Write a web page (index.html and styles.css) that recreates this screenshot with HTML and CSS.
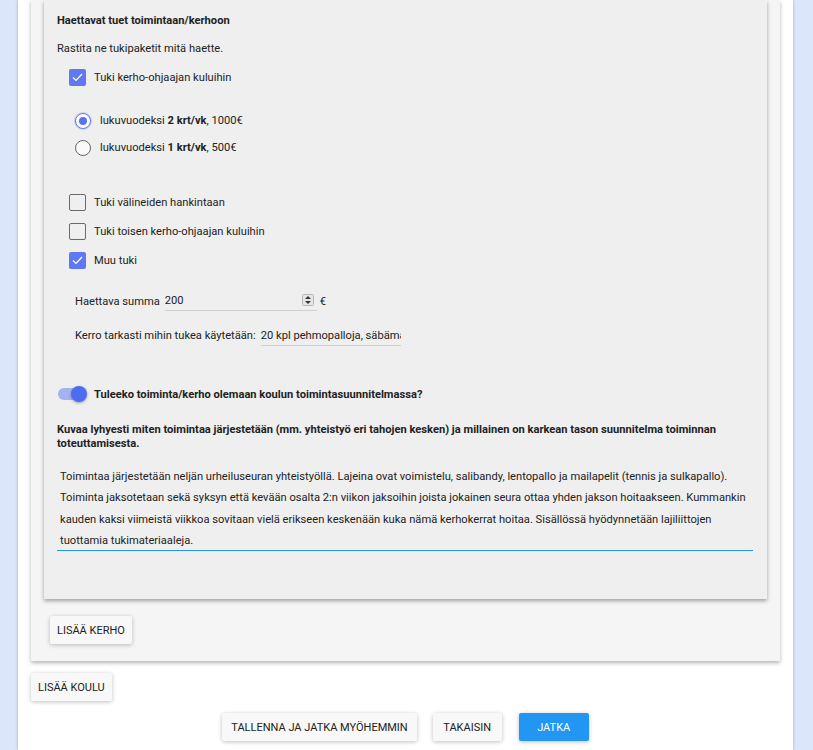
FILE: index.html
```html
<!DOCTYPE html>
<html lang="fi">
<head>
<meta charset="utf-8">
<title>Hakemus: kerhot</title>
<link rel="stylesheet" href="styles.css">
</head>
<body>
<div class="page">

<div class="school-card">
  <div class="club-card">
    <div class="section-title">Haettavat tuet toimintaan/kerhoon</div>
    <p class="hint">Rastita ne tukipaketit mitä haette.</p>

    <label class="check-row first">
      <span class="checkbox checked"><svg viewBox="0 0 17 17" width="17" height="17"><polyline points="4,8.5 7,11.5 13,5" fill="none" stroke="#fff" stroke-width="1.2"/></svg></span>
      Tuki kerho-ohjaajan kuluihin
    </label>

    <div class="radio-group">
      <label class="radio-row"><span class="radio checked"></span>lukuvuodeksi&nbsp;<b>2 krt/vk</b>, 1000€</label>
      <label class="radio-row"><span class="radio"></span>lukuvuodeksi&nbsp;<b>1 krt/vk</b>, 500€</label>
    </div>

    <div class="check-group">
      <label class="check-row"><span class="checkbox"></span>Tuki välineiden hankintaan</label>
      <label class="check-row"><span class="checkbox"></span>Tuki toisen kerho-ohjaajan kuluihin</label>
      <label class="check-row">
        <span class="checkbox checked"><svg viewBox="0 0 17 17" width="17" height="17"><polyline points="4,8.5 7,11.5 13,5" fill="none" stroke="#fff" stroke-width="1.2"/></svg></span>
        Muu tuki
      </label>
    </div>

    <div class="field-row sum-row">
      <span class="field-label">Haettava summa</span>
      <span class="field-input sum-input">200
        <svg class="spinner" viewBox="0 0 12 12" width="12" height="12"><rect x="0.5" y="0.5" width="11" height="11" rx="1" fill="#e6e6e6" stroke="#b5b5b5"/><polygon points="3,5 6,2 9,5" fill="#333"/><polygon points="3,7 6,10 9,7" fill="#333"/></svg>
      </span>
      <span class="unit">€</span>
    </div>

    <div class="field-row use-row">
      <span class="field-label">Kerro tarkasti mihin tukea käytetään:</span>
      <input class="text-input" type="text" value="20 kpl pehmopalloja, säbämailoja">
    </div>

    <div class="toggle-row">
      <span class="toggle"><span class="toggle-knob"></span></span>
      <span class="toggle-label">Tuleeko toiminta/kerho olemaan koulun toimintasuunnitelmassa?</span>
    </div>

    <div class="question">Kuvaa lyhyesti miten toimintaa järjestetään (mm. yhteistyö eri tahojen kesken) ja millainen on karkean tason suunnitelma toiminnan toteuttamisesta.</div>

    <div class="answer">Toimintaa järjestetään neljän urheiluseuran yhteistyöllä. Lajeina ovat voimistelu, salibandy, lentopallo ja mailapelit (tennis ja sulkapallo). Toiminta jaksotetaan sekä syksyn että kevään osalta 2:n viikon jaksoihin joista jokainen seura ottaa yhden jakson hoitaakseen. Kummankin kauden kaksi viimeistä viikkoa sovitaan vielä erikseen keskenään kuka nämä kerhokerrat hoitaa. Sisällössä hyödynnetään lajiliittojen tuottamia tukimateriaaleja.</div>
  </div>

  <button class="btn add-club">Lisää kerho</button>
</div>

<button class="btn add-school">Lisää koulu</button>

<div class="actions">
  <button class="btn save">Tallenna ja jatka myöhemmin</button>
  <button class="btn back">Takaisin</button>
  <button class="btn primary">Jatka</button>
</div>

</div>
</body>
</html>
```

FILE: styles.css
```css
/* Hakemuslomake: kerhojen tuet */

body
{ margin: 0;
background-color: #dce6fb;
font-family: Roboto, "Liberation Sans", sans-serif;
font-size: 11.15px;
color: #222;
}

div.page
{ width: 775px;
margin-left: 18px;
height: 750px;
background-color: #fff;
box-shadow: 0 0 3px rgba(0,0,0,0.25);
overflow: hidden;
}

/* Cards */

div.school-card
{ margin: 0 13px;
padding-bottom: 17px;
background-color: #f5f5f5;
box-shadow: 0 2px 4px rgba(0,0,0,0.3);
}

div.club-card
{ margin: 0 13px;
padding: 13px 14px 48px 13px;
background-color: #efefef;
box-shadow: 0 2px 4px rgba(0,0,0,0.35);
}

div.section-title
{ font-weight: bold;
line-height: 16px;
}

p.hint
{ margin: 12px 0 0 0;
line-height: 16px;
}

/* Checkboxes and radios */

label.check-row
{ display: flex;
align-items: center;
height: 29px;
padding-left: 12px;
}

label.check-row.first
{ margin-top: 6px;
}

span.checkbox
{ box-sizing: border-box;
width: 17px;
height: 17px;
margin-right: 8px;
border: 1px solid #6b6b6b;
border-radius: 2px;
display: flex;
}

span.checkbox.checked
{ border: none;
background-color: #6079f0;
}

div.radio-group
{ margin-top: 15px;
padding-left: 18px;
}

label.radio-row
{ display: flex;
align-items: center;
height: 27px;
}

span.radio
{ box-sizing: border-box;
width: 16px;
height: 16px;
margin-right: 9px;
border: 1px solid #666;
border-radius: 50%;
background-color: #fafafa;
position: relative;
}

span.radio.checked
{ border-color: #6079f0;
background-color: #fff;
box-shadow: 0 0 0 1px rgba(96,121,240,0.25);
}

span.radio.checked::after
{ content: "";
position: absolute;
left: 3px; top: 3px;
width: 8px; height: 8px;
border-radius: 50%;
background-color: #5b73f0;
}

div.check-group
{ margin-top: 27px;
}

/* Text fields */

div.field-row
{ display: flex;
align-items: center;
padding-left: 18px;
}

div.sum-row
{ margin-top: 16px;
}

div.use-row
{ margin-top: 14px;
}

span.field-label
{ margin-right: 2px;
}

span.field-input
{ box-sizing: border-box;
height: 20px;
display: flex;
align-items: center;
border-bottom: 1px solid #d0d0d0;
white-space: nowrap;
overflow: hidden;
}

span.sum-input
{ width: 152px;
margin-left: 3px;
position: relative;
}

svg.spinner
{ position: absolute;
right: 3px;
top: 3px;
}

input.text-input
{ box-sizing: border-box;
width: 140px;
height: 21px;
margin-left: 3px;
padding: 0;
border: none;
border-bottom: 1px solid #d0d0d0;
background: transparent;
font-family: Roboto, "Liberation Sans", sans-serif;
font-size: 11.15px;
color: #222;
}

span.unit
{ margin-left: 3px;
}

/* Toggle */

div.toggle-row
{ display: flex;
align-items: center;
height: 20px;
margin-top: 38px;
}

span.toggle
{ width: 28px;
height: 12px;
margin-left: 1px;
margin-right: 8px;
border-radius: 6px;
background-color: #a5b2f2;
position: relative;
}

span.toggle-knob
{ position: absolute;
right: -1px;
top: -2px;
width: 16px;
height: 16px;
border-radius: 50%;
background-color: #4d6cf0;
box-shadow: 0 1px 3px rgba(0,0,0,0.35);
}

span.toggle-label
{ font-weight: bold;
}

div.question
{ margin-top: 19px;
font-weight: bold;
line-height: 14px;
}

div.answer
{ height: 84px;
margin-top: 15px;
padding: 0 3px;
line-height: 21.3px;
overflow: hidden;
border-bottom: 1px solid #2196f3;
}

/* Buttons */

button.btn
{ height: 28px;
padding: 0 9px;
border: none;
border-radius: 2px;
background-color: #f8f8f8;
box-shadow: 0 1px 4px rgba(0,0,0,0.25);
font-family: Roboto, "Liberation Sans", sans-serif;
font-size: 11px;
text-transform: uppercase;
color: #222;
}

button.add-club
{ margin: 17px 0 0 19px;
padding: 0 7px;
}

button.add-school
{ margin: 12px 0 0 13px;
padding: 0 7px;
}

div.actions
{ display: flex;
justify-content: center;
gap: 16px;
margin-top: 12px;
}

button.btn.back
{ width: 69px;
}

button.btn.primary
{ width: 70px;
margin-left: 1px;
background-color: #2196f3;
color: #fff;
}
```
